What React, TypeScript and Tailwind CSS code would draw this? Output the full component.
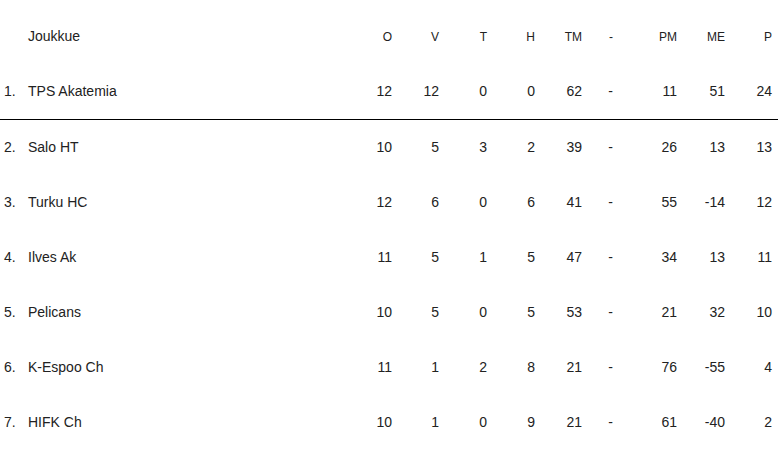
const columns = ['O', 'V', 'T', 'H', 'TM', '-', 'PM', 'ME', 'P'];

type Row = {
  rank: number;
  team: string;
  stats: (number | string)[];
};

const rows: Row[] = [
  { rank: 1, team: 'TPS Akatemia', stats: [12, 12, 0, 0, 62, '-', 11, 51, 24] },
  { rank: 2, team: 'Salo HT', stats: [10, 5, 3, 2, 39, '-', 26, 13, 13] },
  { rank: 3, team: 'Turku HC', stats: [12, 6, 0, 6, 41, '-', 55, -14, 12] },
  { rank: 4, team: 'Ilves Ak', stats: [11, 5, 1, 5, 47, '-', 34, 13, 11] },
  { rank: 5, team: 'Pelicans', stats: [10, 5, 0, 5, 53, '-', 21, 32, 10] },
  { rank: 6, team: 'K-Espoo Ch', stats: [11, 1, 2, 8, 21, '-', 76, -55, 4] },
  { rank: 7, team: 'HIFK Ch', stats: [10, 1, 0, 9, 21, '-', 61, -40, 2] },
];

const grid =
  'grid grid-cols-[24px_1fr_47px_47px_48px_48px_47px_31px_64px_48px_47px] items-center h-[55px] pl-[4px] pr-[6px]';

export default function App() {
  return (
    <div className="w-[778px] pt-[9px] bg-white text-[#222] font-['Liberation_Sans',Arial,sans-serif]">
      {/* otsikkorivi */}
      <div className={grid}>
        <div />
        <div className="text-[14px]">Joukkue</div>
        {columns.map(c => (
          <div key={c} className="text-right text-[12px]">{c}</div>
        ))}
      </div>

      {rows.map(r => (
        <div
          key={r.rank}
          className={`${grid} text-[14px] ${r.rank === 1 ? 'border-b border-black h-[56px]' : ''}`}
        >
          <div>{r.rank}.</div>
          <div>{r.team}</div>
          {r.stats.map((s, i) => (
            <div key={i} className="text-right">{s}</div>
          ))}
        </div>
      ))}
    </div>
  );
}
